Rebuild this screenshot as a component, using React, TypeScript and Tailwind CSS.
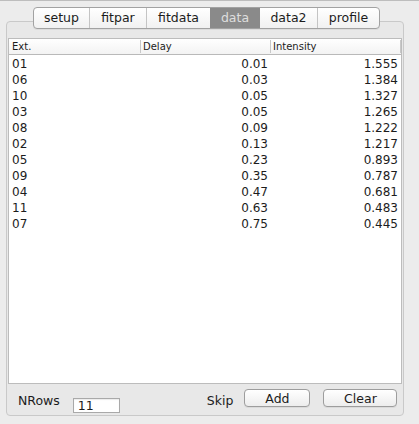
import React from 'react';

const tabs = [
  { label: 'setup', w: 'w-[55px]' },
  { label: 'fitpar', w: 'w-[57px]' },
  { label: 'fitdata', w: 'w-[64px]' },
  { label: 'data', w: 'w-[50px]', active: true },
  { label: 'data2', w: 'w-[57px]' },
  { label: 'profile', w: 'w-[62px]' },
];

const rows = [
  ['01', '0.01', '1.555'],
  ['06', '0.03', '1.384'],
  ['10', '0.05', '1.327'],
  ['03', '0.05', '1.265'],
  ['08', '0.09', '1.222'],
  ['02', '0.13', '1.217'],
  ['05', '0.23', '0.893'],
  ['09', '0.35', '0.787'],
  ['04', '0.47', '0.681'],
  ['11', '0.63', '0.483'],
  ['07', '0.75', '0.445'],
];

export default function App() {
  return (
    <div
      className="w-[419px] h-[424px] bg-[#ececec] border-t border-[#bdbdbd] text-[#1c1c1c] overflow-hidden"
      style={{ fontFamily: '"DejaVu Sans", Verdana, sans-serif' }}
    >
      <div className="pt-[6px]">
        {/* tab strip */}
        <div className="relative z-10 flex justify-center pr-[6px]">
          <div className="flex h-[22px] rounded-[4px] border border-[#a2a2a2] bg-gradient-to-b from-white to-[#f1f1f1] overflow-hidden shadow-[0_1px_0_rgba(0,0,0,0.05)]">
            {tabs.map((t, i) => (
              <div
                key={t.label}
                className={`${t.w} flex items-center justify-center text-[12.5px] ${
                  t.active ? 'bg-[#8a8a8a] text-[#dedede]' : ''
                } ${
                  i > 0 && !t.active && !tabs[i - 1].active
                    ? 'border-l border-[#c4c4c4]'
                    : ''
                }`}
              >
                <span className="leading-none">{t.label}</span>
              </div>
            ))}
          </div>
        </div>

        {/* panel */}
        <div className="ml-[6px] mt-[-8px] w-[398px] h-[395px] rounded-[4px] border border-[#c9c9c9] bg-[#e8e8e8] px-[1px] pt-[16px]">
          <div className="w-[394px] h-[346px] bg-white border border-[#bcbcbc]">
            <div className="flex h-[16px] border-b border-[#b9b9b9] bg-gradient-to-b from-white to-[#f3f3f3] text-[10px] leading-[15px]">
              <div className="w-[131px] pl-[3px]">Ext.</div>
              <div className="w-[130px] pl-[2px] border-l border-[#c8c8c8] my-[1px] leading-[13px]">Delay</div>
              <div className="w-[131px] pl-[2px] border-l border-r border-[#c8c8c8] my-[1px] leading-[13px]">Intensity</div>
            </div>
            <div className="text-[12px] leading-[16px] pt-[1px]">
              {rows.map((r) => (
                <div key={r[0]} className="flex h-[16px]">
                  <div className="w-[131px] pl-[3px]">{r[0]}</div>
                  <div className="w-[130px] text-right pr-[2px]">{r[1]}</div>
                  <div className="w-[131px] text-right pr-[3px]">{r[2]}</div>
                </div>
              ))}
            </div>
          </div>

          {/* bottom controls */}
          <div className="flex items-start h-[31px] text-[12.5px]">
            <span className="ml-[10px] mt-[9px] leading-[15px]">NRows</span>
            <div className="ml-[13px] mt-[14px] w-[47px] h-[15px] border border-[#a9a9a9] bg-white pl-[4px] text-[12.5px] leading-[13px] shadow-[inset_0_1px_1px_rgba(0,0,0,0.08)]">
              11
            </div>
            <span className="ml-[87px] mt-[9px] leading-[15px]">Skip</span>
            <button className="ml-[11px] mt-[5px] w-[66px] h-[18px] rounded-[4px] border border-[#9d9d9d] bg-gradient-to-b from-white to-[#ededed] text-[12.5px] leading-[15px] shadow-[0_1px_0_rgba(0,0,0,0.06)]">
              Add
            </button>
            <button className="ml-[13px] mt-[5px] w-[74px] h-[18px] rounded-[4px] border border-[#9d9d9d] bg-gradient-to-b from-white to-[#ededed] text-[12.5px] leading-[15px] shadow-[0_1px_0_rgba(0,0,0,0.06)]">
              Clear
            </button>
          </div>
        </div>
      </div>
    </div>
  );
}
